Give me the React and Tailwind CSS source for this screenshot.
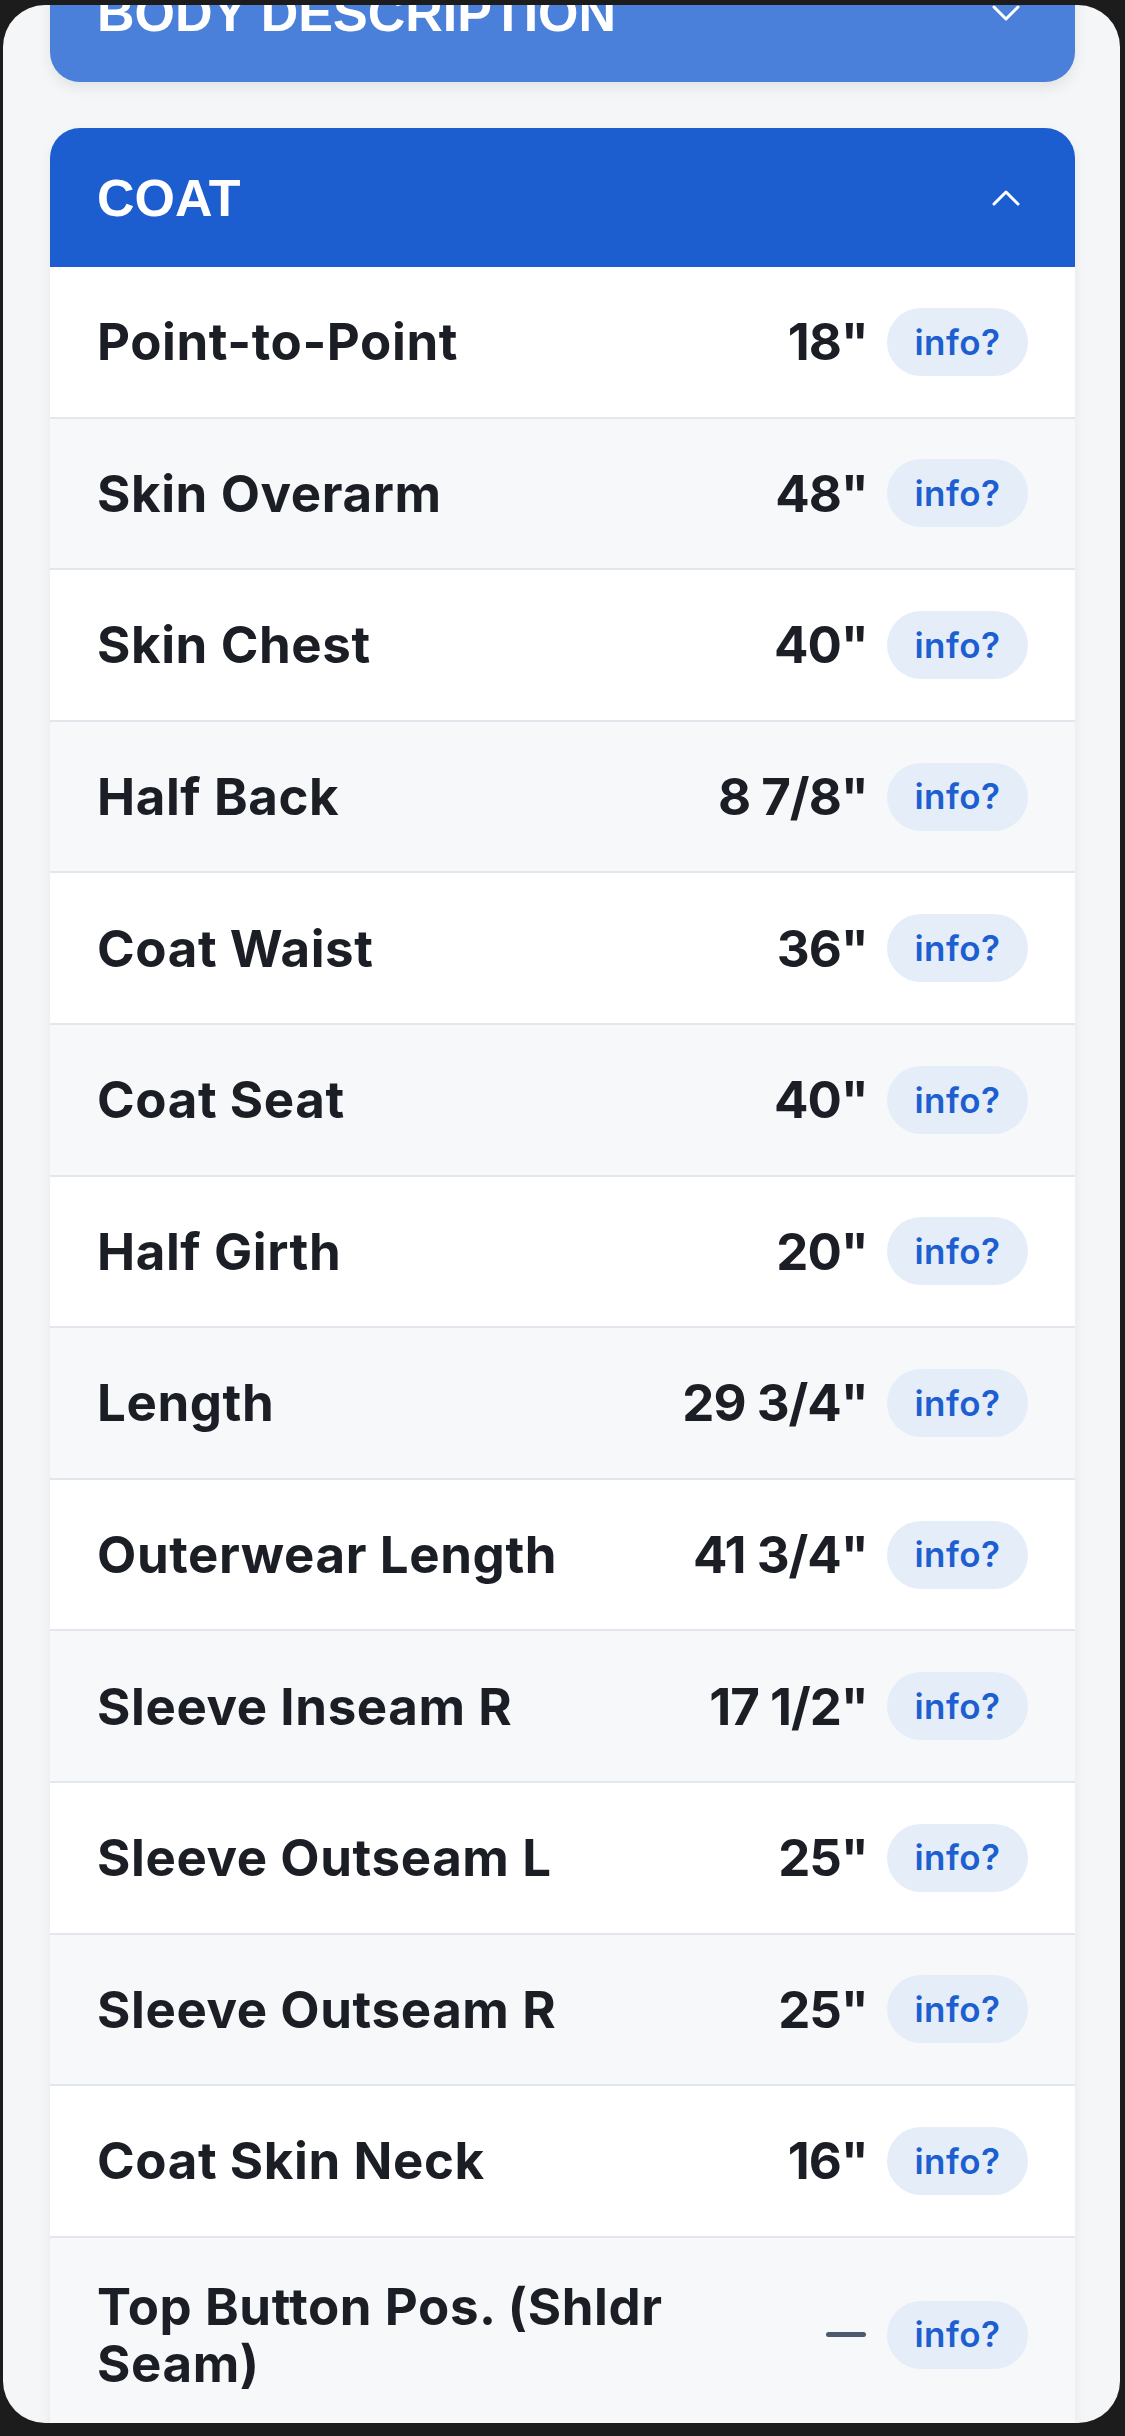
import React from 'react';

const rows = [
  { label: 'Point-to-Point', value: '18"' },
  { label: 'Skin Overarm', value: '48"' },
  { label: 'Skin Chest', value: '40"' },
  { label: 'Half Back', value: '8 7/8"' },
  { label: 'Coat Waist', value: '36"' },
  { label: 'Coat Seat', value: '40"' },
  { label: 'Half Girth', value: '20"' },
  { label: 'Length', value: '29 3/4"' },
  { label: 'Outerwear Length', value: '41 3/4"' },
  { label: 'Sleeve Inseam R', value: '17 1/2"' },
  { label: 'Sleeve Outseam L', value: '25"' },
  { label: 'Sleeve Outseam R', value: '25"' },
  { label: 'Coat Skin Neck', value: '16"' },
  { label: 'Top Button Pos. (Shldr Seam)', value: null },
];

function Chevron({ up }) {
  return (
    <svg width="28" height="16" viewBox="0 0 28 16" fill="none" className="mr-[8px]">
      <path
        d={up ? 'M2 14 L14 2 L26 14' : 'M2 2 L14 14 L26 2'}
        stroke="white"
        strokeWidth="3"
        strokeLinecap="round"
        strokeLinejoin="round"
      />
    </svg>
  );
}

function Row({ label, value, odd }) {
  return (
    <div
      className={`flex items-center justify-between min-h-[151.6px] py-[40px] pl-[47px] pr-[47px] border-b-2 border-[#e3e7ed] ${
        odd ? 'bg-[#f7f8f9]' : 'bg-white'
      }`}
    >
      <span className="max-w-[620px] text-[51px] leading-[57px] font-bold text-[#1b1e25] tracking-[0.6px]">
        {label}
      </span>
      <div className="flex items-center gap-[19px]">
        {value ? (
          <span className="text-[51px] leading-[57px] font-bold text-[#1b1e25] tracking-[-1px]">{value}</span>
        ) : (
          <span className="block w-[40px] h-[5px] mr-[2px] rounded-full bg-[#4d5b70]" />
        )}
        <button className="w-[141px] h-[68px] rounded-full bg-[#e5edf9] text-[#1d5fd0] text-[35px] font-semibold tracking-[0.5px] flex items-center justify-center">
          info?
        </button>
      </div>
    </div>
  );
}

export default function App() {
  return (
    <div className="h-[2436px] bg-[#1c1c1c] pt-[5px] pl-[3px] pr-[5px] pb-[13px] font-['Inter',sans-serif]">
      <div className="h-full rounded-[42px] bg-[#f5f6f8] overflow-hidden pl-[47px] pr-[45px]">
        <div className="-mt-[62px]">
          <div className="h-[139px] rounded-[30px] bg-[#4a80da] shadow-[0_6px_14px_rgba(0,0,0,0.08)] flex items-center justify-between px-[47px]">
            <span className="font-['Liberation_Sans',Arial,sans-serif] font-bold text-[52px] text-white">
              BODY DESCRIPTION
            </span>
            <Chevron />
          </div>

          <div className="mt-[46px] rounded-t-[30px] overflow-hidden shadow-[0_6px_14px_rgba(0,0,0,0.06)]">
            <div className="h-[139px] bg-[#1c5ecf] flex items-center justify-between px-[47px]">
              <span className="font-['Liberation_Sans',Arial,sans-serif] font-bold text-[52px] text-white">
                COAT
              </span>
              <Chevron up />
            </div>
            {rows.map((r, i) => (
              <Row key={r.label} label={r.label} value={r.value} odd={i % 2 === 1} />
            ))}
          </div>
        </div>
      </div>
    </div>
  );
}
